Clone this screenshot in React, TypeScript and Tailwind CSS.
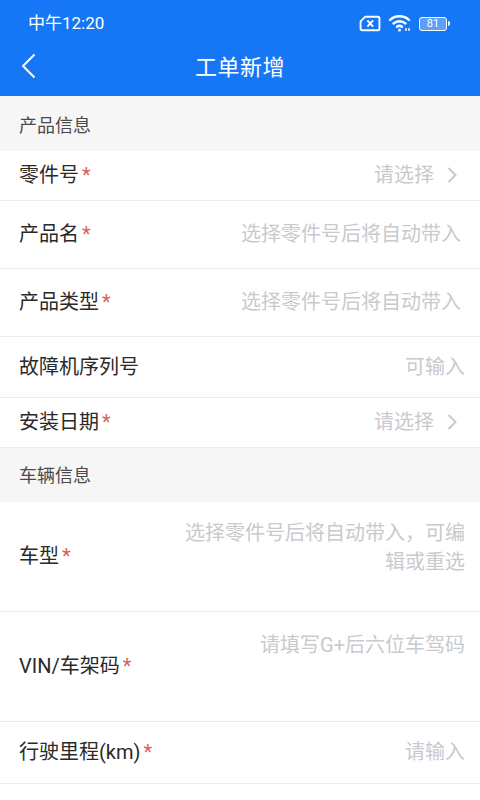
import type { ReactNode } from "react";

const FONT = "font-['Roboto','Noto_Sans_CJK_SC',sans-serif]";

function SectionTitle({ children, className }: { readonly children: ReactNode; readonly className: string }) {
  return (
    <div className={`flex items-center bg-[#f6f6f6] pl-[19px] text-[18px] text-[#4a4a4a] ${className}`}>
      {children}
    </div>
  );
}

function Chevron() {
  return (
    <svg width="12" height="18" viewBox="0 0 12 18" fill="none" className="ml-[12px] mr-[7px]">
      <path d="M2.5 2 L9.5 9 L2.5 16" stroke="#c8cacd" strokeWidth="2" />
    </svg>
  );
}

function Row({
  label,
  required = true,
  value,
  arrow = false,
  height,
  className = "items-center pb-[2px] pr-[15px]",
  valueClass = "",
}: {
  readonly label: string;
  readonly required?: boolean;
  readonly value: ReactNode;
  readonly arrow?: boolean;
  readonly height: string;
  readonly className?: string;
  readonly valueClass?: string;
}) {
  return (
    <div className={`flex justify-between border-b border-[#ececec] pl-[19px] ${height} ${className}`}>
      <div className="flex shrink-0 items-center self-center whitespace-nowrap text-[20px] text-[#2a2a2a]">
        {label}
        {required && <span className="ml-[3px] text-[20px] text-[#d9605a]">*</span>}
      </div>
      <div className={`flex items-center text-right text-[20px] text-[#c8cacd] ${valueClass}`}>
        <span>{value}</span>
        {arrow && <Chevron />}
      </div>
    </div>
  );
}

export default function App() {
  return (
    <div className={`h-[800px] w-[480px] overflow-hidden bg-white ${FONT}`}>
      <div className="h-[96px] bg-[#1677f6] text-white">
        <div className="flex h-[47px] items-center justify-between pl-[28px] pr-[30px]">
          <span className="text-[17px]">中午12:20</span>
          <div className="flex items-center gap-[7px]">
            <svg width="22" height="17" viewBox="0 0 21 16" fill="none" stroke="white" strokeWidth="1.8">
              <path d="M6 1.5 H18 a1.5 1.5 0 0 1 1.5 1.5 V13 a1.5 1.5 0 0 1 -1.5 1.5 H3 a1.5 1.5 0 0 1 -1.5 -1.5 V6 Z" strokeLinejoin="round" />
              <path d="M8 5 L13.5 11 M13.5 5 L8 11" />
            </svg>
            <svg width="24" height="19" viewBox="0 0 24 19" fill="none" stroke="white" strokeWidth="2.4" strokeLinecap="round">
              <path d="M2 6 C7 1 16 1 21 6" />
              <path d="M5.5 9.5 C9 6.5 14 6.5 17.5 9.5" />
              <path d="M9 12.8 C10.5 11.6 12.5 11.6 14 12.8" />
              <circle cx="11.5" cy="16" r="1.5" fill="white" stroke="none" />
              <path d="M18 14 V17 M21 14 V17" strokeWidth="1.4" strokeLinecap="butt" />
            </svg>
            <div className="flex items-center">
              <div className="flex h-[14px] w-[28px] items-center justify-center rounded-[3px] border-[1.5px] border-white bg-white/30 text-[11px] leading-none text-white">
                81
              </div>
              <div className="ml-[1px] h-[5px] w-[2px] rounded-r-sm bg-white" />
            </div>
          </div>
        </div>
        <div className="relative flex h-[41px] items-center justify-center">
          <svg width="16" height="26" viewBox="0 0 16 26" fill="none" className="absolute left-[21px] top-[6px]">
            <path d="M13.5 1.5 L2 13 L13.5 24.5" stroke="white" strokeWidth="2" />
          </svg>
          <span className="text-[22px] tracking-[0.5px]">工单新增</span>
        </div>
      </div>

      <SectionTitle className="h-[55px] pt-[3px]">产品信息</SectionTitle>
      <Row label="零件号" value="请选择" arrow height="h-[50px]" />
      <Row label="产品名" value="选择零件号后将自动带入" height="h-[68px]" className="items-center pb-[2px] pr-[19px]" />
      <Row label="产品类型" value="选择零件号后将自动带入" height="h-[68px]" className="items-center pb-[2px] pr-[19px]" />
      <Row label="故障机序列号" required={false} value="可输入" height="h-[61px]" className="items-center pr-[15px]" />
      <Row label="安装日期" value="请选择" arrow height="h-[50px]" />
      <SectionTitle className="h-[54px]">车辆信息</SectionTitle>
      <Row
        label="车型"
        value="选择零件号后将自动带入，可编辑或重选"
        height="h-[110px]"
        className="items-start pb-[2px] pr-[15px]"
        valueClass="w-[290px] pt-[17px] leading-[29px]"
      />
      <Row
        label="VIN/车架码"
        value="请填写G+后六位车驾码"
        height="h-[110px]"
        className="items-start pb-[2px] pr-[15px]"
        valueClass="pt-[18px] leading-[30px]"
      />
      <Row label="行驶里程(km)" value="请输入" height="h-[62px]" />
    </div>
  );
}
